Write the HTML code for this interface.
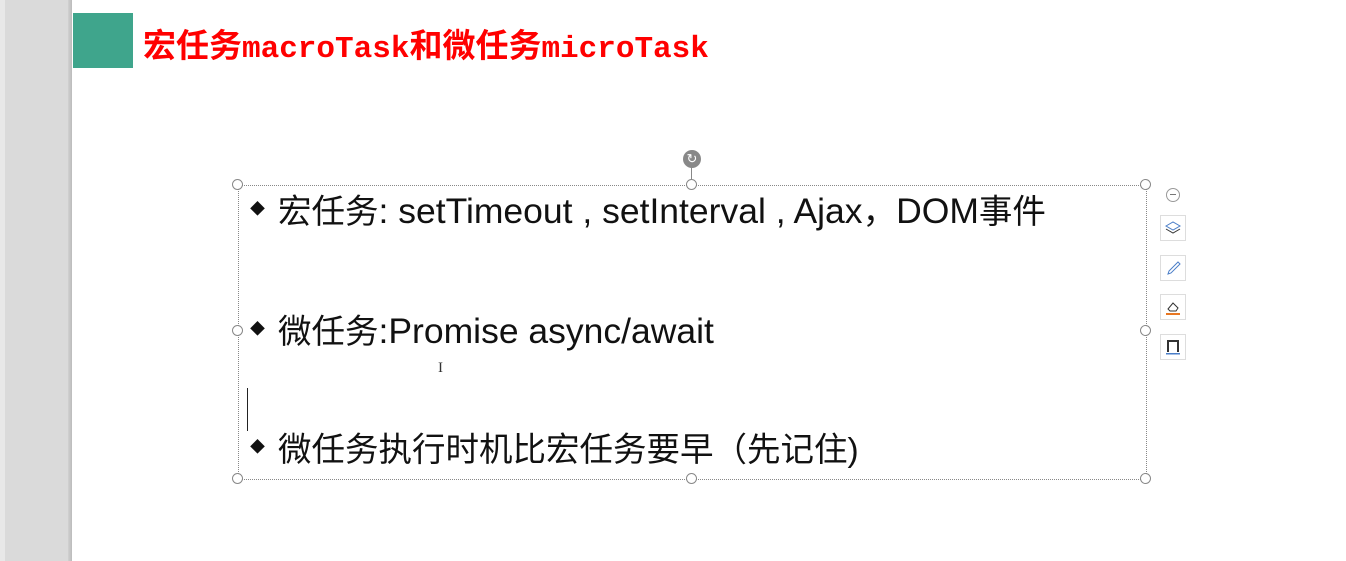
<!DOCTYPE html>
<html><head><meta charset="utf-8"><style>
body{margin:0;width:1346px;height:561px;background:#fff;position:relative;overflow:hidden;font-family:"Liberation Sans","Noto Sans CJK SC",sans-serif}
.strip{position:absolute;left:0;top:0;width:72px;height:561px;background:#dadada}
.strip:before{content:"";position:absolute;left:0;top:0;width:5px;height:561px;background:#e8e8e8}
.strip:after{content:"";position:absolute;right:0;top:0;width:4px;height:561px;background:linear-gradient(90deg,#d0d0d0,#bcbcbc)}
.green{position:absolute;left:73px;top:13px;width:60px;height:55px;background:#3fa58c}
.title{position:absolute;left:143px;top:23px;font-size:33px;font-weight:bold;color:#f00;white-space:nowrap;font-family:"Noto Sans CJK SC",sans-serif;line-height:40px}
.title span{font-family:"Liberation Mono",monospace;font-size:31px}
.box{position:absolute;left:238px;top:185px;width:907px;height:293px;border:1px dotted #888}
.h{position:absolute;width:9px;height:9px;border:1px solid #888;border-radius:50%;background:#fff}
.line{position:absolute;left:250px;font-size:33.5px;color:#111;white-space:nowrap;line-height:40px}
.line i{font-style:normal;font-size:35.5px}
.line b{font-size:15px;display:inline-block;width:28px;vertical-align:middle;position:relative;top:-4px}
.ic{position:absolute;left:1160px;width:26px;height:26px;border:1px solid #ddd;background:#fff;box-sizing:border-box}
</style></head><body>
<div class="strip"></div>
<div class="green"></div>
<div class="title">宏任务<span>macroTask</span>和微任务<span>microTask</span></div>
<div class="box"></div>
<div class="h" style="left:232px;top:179px"></div>
<div class="h" style="left:686px;top:179px"></div>
<div class="h" style="left:1140px;top:179px"></div>
<div class="h" style="left:232px;top:325px"></div>
<div class="h" style="left:1140px;top:325px"></div>
<div class="h" style="left:232px;top:473px"></div>
<div class="h" style="left:686px;top:473px"></div>
<div class="h" style="left:1140px;top:473px"></div>
<div style="position:absolute;left:691px;top:166px;width:1px;height:14px;background:#888"></div>
<div style="position:absolute;left:683px;top:150px;width:18px;height:18px;border-radius:50%;background:#888;color:#fff;font-size:13px;text-align:center;line-height:18px">↻</div>
<div class="line" style="top:191px"><b>◆</b>宏任务<i>: setTimeout , setInterval , Ajax</i>，<i>DOM</i>事件</div>
<div class="line" style="top:311px"><b>◆</b>微任务<i>:Promise async/await</i></div>
<div class="line" style="top:431px"><b>◆</b>微任务执行时机比宏任务要早（先记住)</div>
<div style="position:absolute;left:247px;top:388px;width:1px;height:43px;background:#222"></div>
<div style="position:absolute;left:438px;top:360px;font-size:15px;color:#333;font-family:'Liberation Serif',serif">I</div>
<div style="position:absolute;left:1166px;top:188px;width:14px;height:14px;border:1px solid #999;border-radius:50%;box-sizing:border-box"><div style="position:absolute;left:3px;top:5px;width:6px;height:1px;background:#777"></div></div>
<div class="ic" style="top:215px"><svg width="24" height="24"><path d="M5 10l7-4 7 4-7 4z" fill="none" stroke="#4a7ec8"/><path d="M5 13l7 4 7-4" fill="none" stroke="#333"/></svg></div>
<div class="ic" style="top:255px"><svg width="24" height="24"><path d="M7 18l3-1 9-9-2-2-9 9z" fill="none" stroke="#4a7ec8"/></svg></div>
<div class="ic" style="top:294px"><svg width="24" height="24"><path d="M7 14l5-6 5 5-2 3H9z" fill="none" stroke="#333"/><rect x="5" y="18" width="14" height="2" fill="#e87722"/></svg></div>
<div class="ic" style="top:334px"><svg width="24" height="24"><path d="M7 17V6h10v11" fill="none" stroke="#333" stroke-width="2"/><rect x="5" y="18" width="14" height="1.5" fill="#4a7ec8"/></svg></div>
</body></html>
